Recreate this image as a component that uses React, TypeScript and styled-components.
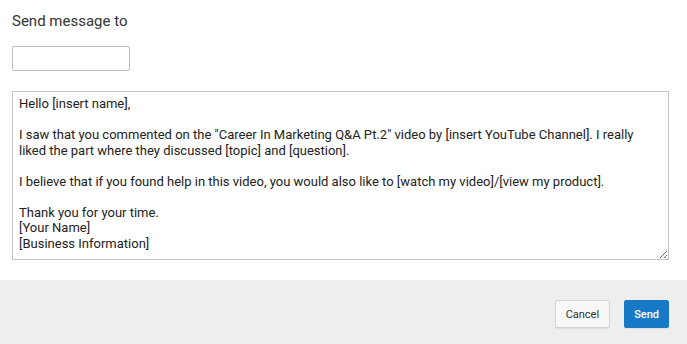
import { createGlobalStyle, styled } from 'styled-components';

const GlobalStyle = createGlobalStyle`
  html, body {
    margin: 0;
    padding: 0;
    background: #fff;
    font-family: Roboto, "Liberation Sans", Arial, sans-serif;
  }
`;

const MESSAGE = `Hello [insert name],

I saw that you commented on the "Career In Marketing Q&A Pt.2" video by [insert YouTube Channel]. I really liked the part where they discussed [topic] and [question].

I believe that if you found help in this video, you would also like to [watch my video]/[view my product].

Thank you for your time.
[Your Name]
[Business Information]`;

const App = () => {
  return (
    <Dialog>
      <GlobalStyle />
      <Body>
        <Title>Send message to</Title>
        <Recipient type="text" />
        <Message defaultValue={MESSAGE} spellCheck={false} />
      </Body>
      <Footer>
        <Button>Cancel</Button>
        <Button $primary>Send</Button>
      </Footer>
    </Dialog>
  );
};

export default App;

const Dialog = styled.div`
  display: flex;
  flex-direction: column;
  width: 687px;
  height: 344px;
`;

const Body = styled.div`
  display: flex;
  flex-direction: column;
  align-items: flex-start;
  flex: 1;
  padding: 12px 18px 0 12px;
`;

const Title = styled.h2`
  margin: 0;
  font-size: 15px;
  font-weight: 400;
  line-height: 18px;
  color: #333;
`;

const Recipient = styled.input`
  box-sizing: border-box;
  width: 118px;
  height: 25px;
  margin-top: 16px;
  padding: 2px 6px;
  border: 1px solid #bdbdbd;
  border-radius: 2px;
  font: 13px Roboto, "Liberation Sans", sans-serif;
  outline: none;
`;

const Message = styled.textarea`
  box-sizing: border-box;
  width: 657px;
  height: 169px;
  margin-top: 20px;
  padding: 4px 6px;
  border: 1px solid #c6c6c6;
  border-radius: 0;
  font: 13px/15.5px Roboto, "Liberation Sans", sans-serif;
  color: #222;
  resize: both;
  overflow: hidden;
  outline: none;
`;

const Footer = styled.div`
  display: flex;
  justify-content: flex-end;
  gap: 14px;
  height: 64px;
  box-sizing: border-box;
  padding: 20px 18px 0 0;
  background: #eee;
`;

const Button = styled.button<{ $primary?: boolean }>`
  box-sizing: border-box;
  height: 28px;
  padding: 0 ${({ $primary }) => ($primary ? '9px' : '10px')};
  border: 1px solid ${({ $primary }) => ($primary ? '#167ac6' : '#d3d3d3')};
  border-radius: 2px;
  background: ${({ $primary }) => ($primary ? '#167ac6' : '#f8f8f8')};
  color: ${({ $primary }) => ($primary ? '#fff' : '#333')};
  font: ${({ $primary }) => ($primary ? 500 : 400)} 11px Roboto, "Liberation Sans", sans-serif;
  box-shadow: 0 1px 0 rgba(0, 0, 0, 0.05);
  cursor: pointer;
`;
